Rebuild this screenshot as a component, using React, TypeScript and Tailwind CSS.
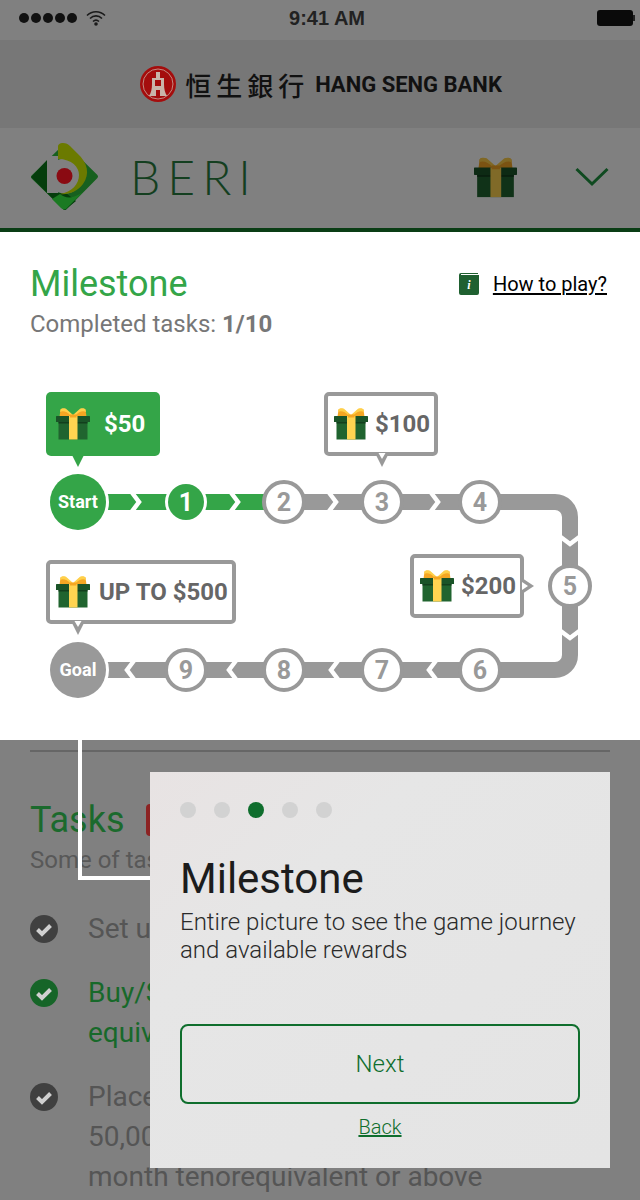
const SANS = 'font-["Roboto",sans-serif]'

const rightChevrons = [142, 241, 339, 441]
const leftChevrons = [124, 226, 328, 426]
const downChevrons = [547, 641]
const steps = [
  { label: '2', x: 284, y: 502 },
  { label: '3', x: 382, y: 502 },
  { label: '4', x: 480, y: 502 },
  { label: '5', x: 570, y: 586 },
  { label: '6', x: 480, y: 670 },
  { label: '7', x: 382, y: 670 },
  { label: '8', x: 284, y: 670 },
  { label: '9', x: 186, y: 670 },
]

function Gift({ className }: { className?: string }) {
  return (
    <svg viewBox="0 0 34 32" className={className} aria-hidden>
      <path d="M17 9 11 2.500C9 .5 6 0 4.500 1.500L3.500 9Z" fill="#f5a623" />
      <path d="M17 9 23 2.500C25 .5 28 0 29.500 1.500L30.500 9Z" fill="#f5a623" />
      <path d="M17 7 10 .8C8 0 5.500 .2 4.500 1.500L4 4C7 2.500 11 3.500 15 8Z" fill="#ffd04a" />
      <path d="M17 7 24 .8C26 0 28.500 .2 29.500 1.500L30 4C27 2.500 23 3.500 19 8Z" fill="#ffd04a" />
      <rect x="2.500" y="14" width="29" height="17.500" fill="#20642f" />
      <rect x="0" y="8" width="34" height="6" rx="0.500" fill="#1a5428" />
      <rect x="2.500" y="14" width="29" height="1.500" fill="#123f1d" />
      <rect x="13" y="8" width="8.500" height="23.500" fill="#ffd451" />
      <rect x="14" y="6.500" width="6.500" height="3" fill="#f5a623" />
    </svg>
  )
}

function Tooltip({
  className,
  tailClassName,
  filled,
  side = 'bottom',
  children,
}: {
  className: string
  tailClassName?: string
  filled?: boolean
  side?: 'bottom' | 'right'
  children: React.ReactNode
}) {
  const tone = filled
    ? 'bg-[#34a548] text-white'
    : 'border-4 border-[#999999] bg-white text-[#666666]'
  return (
    <div className={`absolute flex h-16 items-center rounded-[5px] text-2xl font-bold ${tone} ${className}`}>
      {children}
      {side === 'bottom' ? (
        <svg viewBox="0 0 16 16" className={`absolute h-4 w-4 ${tailClassName}`} aria-hidden>
          <path d="M1 0H15L8 14Z" fill={filled ? '#34a548' : '#999999'} />
          {!filled && <path d="M4.500 0H11.500L8 6Z" fill="#ffffff" />}
        </svg>
      ) : (
        <svg viewBox="0 0 14 18" className="absolute right-[-16px] top-[19px] h-[18px] w-[14px]" aria-hidden>
          <path d="M0 1 12 9 0 17Z" fill="#999999" />
          <path d="M0 5 6 9 0 13Z" fill="#ffffff" />
        </svg>
      )}
    </div>
  )
}

function JourneyMap() {
  return (
    <div className="relative h-[360px] w-full">
      <svg viewBox="0 380 640 360" className={`absolute inset-0 h-full w-full ${SANS}`} role="img" aria-label="Milestone journey">
        <path d="M284 670H78M570 586V655A15 15 0 0 1 555 670H284M284 502H555A15 15 0 0 1 570 517V586" fill="none" stroke="#999999" strokeWidth="16" />
        <path d="M78 502H284" fill="none" stroke="#34a548" strokeWidth="16" />
        <g fill="none" stroke="#ffffff" strokeWidth="4.500">
          {rightChevrons.map((x) => (
            <polyline key={x} points={`${x - 12},490 ${x - 3},502 ${x - 12},514`} />
          ))}
          {leftChevrons.map((x) => (
            <polyline key={x} points={`${x + 12},658 ${x + 3},670 ${x + 12},682`} />
          ))}
          {downChevrons.map((y) => (
            <polyline key={y} points={`558,${y - 12} 570,${y - 3} 582,${y - 12}`} />
          ))}
        </g>
        <circle cx="78" cy="502" r="31" fill="#ffffff" />
        <circle cx="78" cy="502" r="28" fill="#34a548" />
        <text x="78" y="508" textAnchor="middle" fontSize="18" fontWeight="700" fill="#ffffff">Start</text>
        <circle cx="186" cy="502" r="21" fill="#ffffff" />
        <circle cx="186" cy="502" r="18" fill="#34a548" />
        <text x="186" y="511" textAnchor="middle" fontSize="25" fontWeight="700" fill="#ffffff">1</text>
        {steps.map((step) => (
          <g key={step.label}>
            <circle cx={step.x} cy={step.y} r="20" fill="#ffffff" stroke="#999999" strokeWidth="4" />
            <text x={step.x} y={step.y + 9} textAnchor="middle" fontSize="25" fontWeight="700" fill="#999999">
              {step.label}
            </text>
          </g>
        ))}
        <circle cx="78" cy="670" r="31" fill="#ffffff" />
        <circle cx="78" cy="670" r="28" fill="#999999" />
        <text x="78" y="676" textAnchor="middle" fontSize="18" fontWeight="700" fill="#ffffff">Goal</text>
      </svg>

      <Tooltip filled tailClassName="bottom-[-13px] left-[24px]" className="left-[46px] top-[12px] w-[114px] pl-[10px]">
        <Gift className="h-8 w-[34px]" />
        <span className="ml-[14px]">$50</span>
      </Tooltip>
      <Tooltip tailClassName="bottom-[-17px] left-[46px]" className="left-[324px] top-[12px] w-[114px] pl-[6px]">
        <Gift className="h-8 w-[34px]" />
        <span className="ml-[7px]">$100</span>
      </Tooltip>
      <Tooltip side="right" className="left-[410px] top-[174px] w-[114px] pl-[6px]">
        <Gift className="h-8 w-[34px]" />
        <span className="ml-[7px]">$200</span>
      </Tooltip>
      <Tooltip tailClassName="bottom-[-17px] left-[20px]" className="left-[46px] top-[180px] w-[190px] pl-[6px]">
        <Gift className="h-8 w-[34px]" />
        <span className="ml-[9px] whitespace-nowrap">UP TO $500</span>
      </Tooltip>
    </div>
  )
}

function BeriLogo() {
  return (
    <svg viewBox="0 0 70 68" className="h-[68px] w-[70px]" aria-hidden>
      <path d="M3 34 35 3 66 33.500 35 65Z" fill="#17601f" stroke="#17601f" strokeWidth="4" strokeLinejoin="round" />
      <path d="M1 34 18 16V50H36L46 58 35 67 33.500 66.500Z" fill="#053d0c" />
      <path d="M30 51C38 58 50 54 60 42L36 66C34 67 32 66 31 65L22 56Z" fill="#1b7a22" />
      <path d="M17 13H28V50H17Z" fill="#808080" />
      <circle cx="35" cy="33" r="17.500" fill="#808080" />
      <path d="M28 4C28 1 30 0 33 0 36 0 38 1 40 3L47 10C58 20 60 31 53 41 47 49 38 52 30 51 42 49 49 41 49 32 49 24 42 16 28 16Z" fill="#6b7a00" />
      <circle cx="34.500" cy="33" r="8" fill="#8a0a12" />
    </svg>
  )
}

function BankLogo() {
  return (
    <svg viewBox="0 0 36 36" className="h-9 w-9" aria-hidden>
      <circle cx="18" cy="18" r="18" fill="#a40d0d" />
      <circle cx="18" cy="18" r="15" fill="none" stroke="#c9a9a0" strokeWidth="0.800" />
      <path d="M16 6H20V12H24V18C24 23 25 27 27 30H20V24H16V30H9C11 27 12 23 12 18V12H16Z" fill="#c9b5aa" />
      <path d="M15 14H21V20H15Z" fill="#a40d0d" />
    </svg>
  )
}

function CheckBadge({ tone }: { tone: 'dark' | 'green' }) {
  return (
    <svg viewBox="0 0 28 28" className="mt-[6px] h-7 w-7 shrink-0" aria-hidden>
      <circle cx="14" cy="14" r="14" fill={tone === 'green' ? '#166528' : '#404040'} />
      <path d="M7.500 14.500 12 19 20.500 10.500" fill="none" stroke="#d0d0d0" strokeWidth="4" />
    </svg>
  )
}

export default function App() {
  return (
    <div className={`relative h-[1200px] w-[640px] overflow-hidden bg-[#808080] ${SANS}`}>
      <div className="flex h-10 items-center pb-[5px] pl-[19px] pr-[5px]">
        <div className="flex flex-1 items-center">
          <div className="flex gap-[2px]">
            {[0, 1, 2, 3, 4].map((dot) => (
              <span key={dot} className="h-[10px] w-[10px] rounded-full bg-[#111111]" />
            ))}
          </div>
          <svg viewBox="0 0 20 16" className="ml-[9px] h-4 w-5" aria-hidden>
            <path d="M1 5.500C6 .5 14 .5 19 5.500M4 8.500C7.500 5 12.500 5 16 8.500M7 11.500C8.800 9.800 11.200 9.800 13 11.500" fill="none" stroke="#1a1a1a" strokeWidth="1.600" />
            <circle cx="10" cy="14" r="1.800" fill="#1a1a1a" />
          </svg>
        </div>
        <span className='font-["Liberation_Sans",sans-serif] text-xl font-bold text-[#222222]'>9:41 AM</span>
        <div className="flex flex-1 items-center justify-end">
          <span className="h-4 w-9 rounded-[3px] bg-[#0a0a0a]" />
          <span className="h-[6px] w-[2px] bg-[#222222]" />
        </div>
      </div>

      <div className="flex h-[88px] items-center justify-center bg-[#777777] pl-[2px]">
        <BankLogo />
        <span className='ml-[9px] font-["Noto_Sans_CJK_TC",sans-serif] text-[26px] font-medium tracking-[5px] text-[#111111]'>恒生銀行</span>
        <span className="ml-[6px] text-[22px] font-bold text-[#111111]">HANG SENG BANK</span>
      </div>

      <header className="flex h-[104px] items-center border-b-4 border-[#0a3d15] pb-[2px] pl-[30px] pr-[31px]">
        <BeriLogo />
        <span className='ml-[30px] font-["Lato",sans-serif] text-[48px] font-light tracking-[7px] text-[#143f20]'>BERI</span>
        <Gift className="ml-auto h-[41px] w-[43px] brightness-50" />
        <svg viewBox="0 0 34 20" className="ml-[58px] h-5 w-[34px]" aria-hidden>
          <path d="M1.500 2 17 17 32.500 2" fill="none" stroke="#0f4a20" strokeWidth="3" />
        </svg>
      </header>

      <section className="h-[508px] bg-white">
        <div className="flex items-start justify-between px-[30px] pt-[30px]">
          <div>
            <h1 className="text-[36px] font-normal leading-[44px] text-[#34a548]">Milestone</h1>
            <p className="mt-[2px] text-[24px] leading-8 text-[#777777]">
              Completed tasks: <strong className="font-bold">1/10</strong>
            </p>
          </div>
          <div className="mr-[3px] mt-[10px] flex items-center">
            <svg viewBox="0 0 20 22" className="h-[22px] w-5" aria-hidden>
              <path d="M2 0H19V1H2V2H20V20Q20 22 18 22H2Q0 22 0 20V2Q0 0 2 0Z" fill="#1f6030" />
              <text x="10" y="16" textAnchor="middle" fontSize="12" fontStyle="italic" fontWeight="700" fontFamily="Liberation Serif, serif" fill="#ffffff">i</text>
            </svg>
            <a className="ml-[14px] text-xl leading-6 text-black underline underline-offset-2">How to play?</a>
          </div>
        </div>
        <div className="mt-[40px]">
          <JourneyMap />
        </div>
      </section>

      <section className="px-[30px]">
        <div className="mt-[10px] h-[2px] bg-[#666666]" />
        <div className="mt-[46px] flex items-center">
          <h2 className="text-[36px] font-normal leading-[44px] text-[#1b6a2d]">Tasks</h2>
          <span className="ml-[22px] h-8 w-[64px] rounded-[4px] bg-[#8c2323]" />
        </div>
        <p className="mt-[2px] whitespace-nowrap text-[24px] leading-8 text-[#585858]">Some of tasks are required</p>
        <ul className="mt-[33px] flex flex-col gap-[24px] text-[28px] leading-10">
          <li className="flex gap-[30px] text-[#555555]">
            <CheckBadge tone="dark" />
            <span className="whitespace-nowrap">Set up an account</span>
          </li>
          <li className="flex gap-[30px] text-[#17692a]">
            <CheckBadge tone="green" />
            <span className="whitespace-nowrap">
              Buy/Sell foreign currency
              <br />
              equivalent
            </span>
          </li>
          <li className="flex gap-[30px] text-[#555555]">
            <CheckBadge tone="dark" />
            <span className="whitespace-nowrap">
              Place a time deposit of
              <br />
              50,000 or equivalent, 3-
              <br />
              month tenorequivalent or above
            </span>
          </li>
        </ul>
      </section>

      <div className="absolute left-[78px] top-[740px] h-[140px] w-[72px] border-b-4 border-l-4 border-white" />

      <aside className="absolute left-[150px] top-[772px] h-[396px] w-[460px] bg-linear-to-br from-[#e8e3e3] via-[#e6e6e6] via-30% to-[#e4e4e4] px-[30px] pt-[30px]">
        <div className="flex gap-[18px]">
          {[0, 1, 2, 3, 4].map((dot) => (
            <span key={dot} className={`h-4 w-4 rounded-full ${dot === 2 ? 'bg-[#0f6e2d]' : 'bg-[#d2d2d2]'}`} />
          ))}
        </div>
        <h3 className="mt-[35px] text-[42px] font-normal leading-[52px] text-[#1c1c1c]">Milestone</h3>
        <p className="mt-[3px] text-2xl font-light leading-7 text-[#2a2a2a]">
          Entire picture to see the game journey
          <br />
          and available rewards
        </p>
        <button className="mt-[60px] flex h-20 w-[400px] items-center justify-center rounded-lg border-2 border-[#0f6e2d] text-2xl font-light text-[#0f6e2d]">
          Next
        </button>
        <a className="mt-[11px] block text-center text-xl font-light leading-6 text-[#0f6e2d] underline">Back</a>
      </aside>
    </div>
  )
}
